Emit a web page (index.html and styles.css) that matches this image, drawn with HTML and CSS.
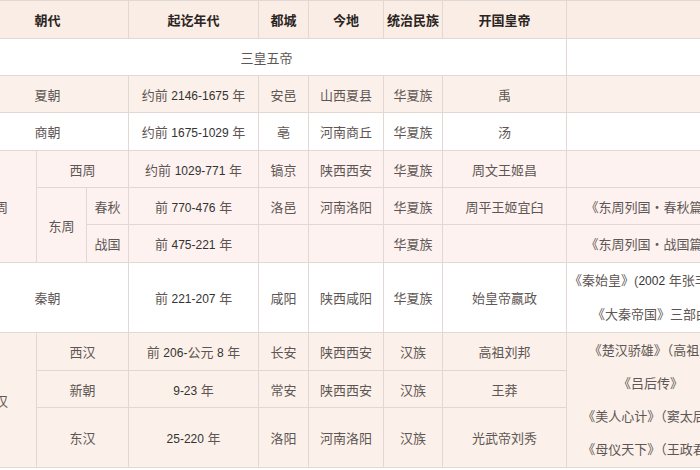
FILE: index.html
```html
<!DOCTYPE html>
<html lang="zh">
<head>
<meta charset="utf-8">
<title>中国朝代表</title>
<link rel="stylesheet" href="styles.css">
</head>
<body>
<div class="wrap">
<table class="dyn">
<colgroup>
<col class="w70"><col class="w50"><col class="w42"><col class="w130"><col class="w50"><col class="w75"><col class="w59"><col class="w124"><col class="w168">
</colgroup>
<thead>
<tr class="head h38"><th colspan="3">朝代</th><th>起讫年代</th><th>都城</th><th>今地</th><th>统治民族</th><th>开国皇帝</th><th></th></tr>
</thead>
<tbody>
<tr class="white h37"><td colspan="8">三皇五帝</td><td></td></tr>
<tr class="peach h37"><td colspan="3">夏朝</td><td>约前 <span class="num">2146-1675</span> 年</td><td>安邑</td><td>山西夏县</td><td>华夏族</td><td>禹</td><td></td></tr>
<tr class="white h38"><td colspan="3">商朝</td><td>约前 <span class="num">1675-1029</span> 年</td><td>亳</td><td>河南商丘</td><td>华夏族</td><td>汤</td><td></td></tr>
<tr class="pink h37"><td rowspan="3">周</td><td colspan="2">西周</td><td>约前 <span class="num">1029-771</span> 年</td><td>镐京</td><td>陕西西安</td><td>华夏族</td><td>周文王姬昌</td><td></td></tr>
<tr class="pink h37"><td rowspan="2">东周</td><td>春秋</td><td>前 <span class="num">770-476</span> 年</td><td>洛邑</td><td>河南洛阳</td><td>华夏族</td><td>周平王姬宜臼</td><td>《东周列国・春秋篇》</td></tr>
<tr class="pink h38"><td>战国</td><td>前 <span class="num">475-221</span> 年</td><td></td><td></td><td>华夏族</td><td></td><td>《东周列国・战国篇》</td></tr>
<tr class="white h70"><td colspan="3">秦朝</td><td>前 <span class="num">221-207</span> 年</td><td>咸阳</td><td>陕西咸阳</td><td>华夏族</td><td>始皇帝嬴政</td><td class="works"><div>《秦始皇》(<span class="num">2002</span> 年张丰毅版)</div><div>《大秦帝国》三部曲</div></td></tr>
<tr class="peach h38"><td rowspan="3">汉</td><td colspan="2">西汉</td><td>前 <span class="num">206-</span>公元 <span class="num">8</span> 年</td><td>长安</td><td>陕西西安</td><td>汉族</td><td>高祖刘邦</td><td rowspan="3" class="works"><div>《楚汉骄雄》（高祖）</div><div>《吕后传》</div><div>《美人心计》（窦太后）</div><div>《母仪天下》（王政君）</div></td></tr>
<tr class="peach h37"><td colspan="2">新朝</td><td><span class="num">9-23</span> 年</td><td>常安</td><td>陕西西安</td><td>汉族</td><td>王莽</td></tr>
<tr class="peach h60"><td colspan="2">东汉</td><td><span class="num">25-220</span> 年</td><td>洛阳</td><td>河南洛阳</td><td>汉族</td><td>光武帝刘秀</td></tr>
</tbody>
</table>
</div>
</body>
</html>
```
FILE: styles.css
```css
html, body {
  margin: 0;
  padding: 0;
  background: #ffffff;
  overflow: hidden;
}
body {
  font-family: "Liberation Sans", "Noto Sans CJK SC", sans-serif;
  font-size: 13px;
  color: #5e5654;
}
.wrap {
  margin-left: -34px;
}
.dyn {
  border-collapse: collapse;
  table-layout: fixed;
  width: 768px;
}
.w70 { width: 70px; }
.w50 { width: 50px; }
.w42 { width: 42px; }
.w130 { width: 130px; }
.w75 { width: 75px; }
.w59 { width: 59px; }
.w124 { width: 124px; }
.w168 { width: 168px; }
.dyn th,
.dyn td {
  border: 1px solid #e2d8d3;
  text-align: center;
  vertical-align: middle;
  padding: 0 2px;
  white-space: nowrap;
  font-weight: normal;
}
.dyn th {
  font-weight: bold;
  color: #2a2422;
}
.head { background: #f9ede5; }
.white { background: #ffffff; }
.peach { background: #fbf1ea; }
.pink { background: #fdf2f0; }
.h37 { height: 37px; }
.h38 { height: 38px; }
.h60 { height: 60px; }
.h70 { height: 70px; }
.num {
  font-size: 12px;
  color: #333333;
}
.works div {
  line-height: 33px;
}
```
